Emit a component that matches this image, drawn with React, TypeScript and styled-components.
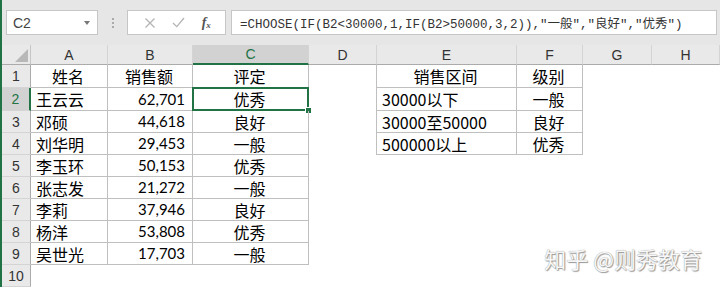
import React from "react";
import styled, { createGlobalStyle, css } from "styled-components";

const GREEN = "#217346";
const GRID = "#bfbfbf";

const columns = ["A", "B", "C", "D", "E", "F", "G", "H"];
const rowCount = 10;

type Align = "left" | "center" | "right";
type CellData = { text: string; align: Align; num?: boolean; border?: boolean; edge?: boolean };

const people = [
  ["王云云", "62,701", "优秀"],
  ["邓硕", "44,618", "良好"],
  ["刘华明", "29,453", "一般"],
  ["李玉环", "50,153", "优秀"],
  ["张志发", "21,272", "一般"],
  ["李莉", "37,946", "良好"],
  ["杨洋", "53,808", "优秀"],
  ["吴世光", "17,703", "一般"],
];

const ranges = [
  ["30000以下", "一般"],
  ["30000至50000", "良好"],
  ["500000以上", "优秀"],
];

const empty = (): CellData => ({ text: "", align: "left" });

const buildRow = (r: number): CellData[] => {
  const cells: CellData[] = columns.map(empty);
  if (r === 0) {
    cells[0] = { text: "姓名", align: "center", border: true };
    cells[1] = { text: "销售额", align: "center", border: true };
    cells[2] = { text: "评定", align: "center", border: true };
    cells[4] = { text: "销售区间", align: "center", border: true, edge: true };
    cells[5] = { text: "级别", align: "center", border: true };
  } else if (r <= 8) {
    const p = people[r - 1];
    cells[0] = { text: p[0], align: "left", border: true };
    cells[1] = { text: p[1], align: "right", num: true, border: true };
    cells[2] = { text: p[2], align: "center", border: true };
    if (r <= 3) {
      const g = ranges[r - 1];
      cells[4] = { text: g[0], align: "left", border: true, edge: true };
      cells[5] = { text: g[1], align: "center", border: true };
    }
  }
  return cells;
};

const App = () => {
  const rows = Array.from({ length: rowCount }, (_, r) => r);
  return (
    <>
      <GlobalStyle />
      <Page>
        <Toolbar>
          <NameBox>
            <span>C2</span>
            <Caret />
          </NameBox>
          <Grip>
            <i />
            <i />
            <i />
          </Grip>
          <FuncButtons>
            <svg width="12" height="12" viewBox="0 0 12 12">
              <path d="M1.5 1.5 L10.5 10.5 M10.5 1.5 L1.5 10.5" stroke="#b4b4b4" strokeWidth="1.3" fill="none" />
            </svg>
            <svg width="13" height="11" viewBox="0 0 13 11">
              <path d="M1 6 L4.8 9.6 L12 1" stroke="#b4b4b4" strokeWidth="1.3" fill="none" />
            </svg>
            <Fx>
              f<sub>x</sub>
            </Fx>
          </FuncButtons>
          <FormulaBox>
            =CHOOSE(IF(B2&lt;30000,1,IF(B2&gt;50000,3,2)),"一般","良好","优秀")
          </FormulaBox>
        </Toolbar>
        <Sheet>
          <Corner />
          {columns.map((c) => (
            <ColHead key={c} $active={c === "C"}>
              {c}
            </ColHead>
          ))}
          {rows.map((r) => (
            <React.Fragment key={r}>
              <RowHead $active={r === 1}>{r + 1}</RowHead>
              {buildRow(r).map((cell, c) => (
                <Cell key={c} $align={cell.align} $border={cell.border} $edge={cell.edge} $num={cell.num}>
                  {cell.text}
                  {r === 1 && c === 2 && (
                    <Selection>
                      <FillHandle />
                    </Selection>
                  )}
                </Cell>
              ))}
            </React.Fragment>
          ))}
        </Sheet>
        <Watermark>知乎 @则秀教育</Watermark>
      </Page>
    </>
  );
};
export default App;

const GlobalStyle = createGlobalStyle`
  html, body {
    margin: 0;
    padding: 0;
    background: #fff;
    font-family: "Noto Sans CJK SC", sans-serif;
  }
`;
const Page = styled.div`
  position: relative;
  width: 720px;
  box-sizing: border-box;
  border-left: 2px solid ${GREEN};
  background: #fff;
`;
const Toolbar = styled.div`
  display: flex;
  align-items: flex-start;
  height: 45px;
  padding-top: 10px;
  box-sizing: border-box;
  background: #e6e6e6;
`;
const Box = css`
  height: 25px;
  box-sizing: border-box;
  background: #fff;
  border: 1px solid #c6c6c6;
  display: flex;
  align-items: center;
`;
const NameBox = styled.div`
  ${Box};
  margin-left: 4px;
  width: 92px;
  justify-content: space-between;
  padding: 0 7px 0 6px;
  font-family: "Liberation Sans", sans-serif;
  font-size: 14px;
  color: #444;
`;
const Caret = styled.span`
  width: 0;
  height: 0;
  border-left: 3.5px solid transparent;
  border-right: 3.5px solid transparent;
  border-top: 4px solid #777;
`;
const Grip = styled.div`
  width: 29px;
  height: 25px;
  display: flex;
  flex-direction: column;
  align-items: center;
  justify-content: center;
  gap: 2px;
  i {
    width: 2px;
    height: 2px;
    background: #aaa;
  }
`;
const FuncButtons = styled.div`
  ${Box};
  width: 99px;
  justify-content: space-around;
  padding: 0 6px 0 8px;
`;
const Fx = styled.span`
  font-family: "Liberation Serif", serif;
  font-style: italic;
  font-weight: bold;
  font-size: 14px;
  color: #555;
  sub {
    font-size: 9px;
    vertical-align: -1px;
  }
`;
const FormulaBox = styled.div`
  ${Box};
  flex: 1;
  margin-left: 5px;
  margin-right: 3px;
  padding-left: 8px;
  font-family: "Liberation Mono", "Noto Sans CJK SC", monospace;
  font-size: 12.5px;
  color: #333;
  white-space: nowrap;
`;
const Sheet = styled.div`
  display: grid;
  grid-template-columns: 29px 77px 85px 116px 68px 140px 66px 69px 1fr;
  grid-template-rows: 20px 23px 23px repeat(8, 22px);
`;
const HeadBase = css<{ $active?: boolean }>`
  box-sizing: border-box;
  display: flex;
  align-items: center;
  justify-content: center;
  font-family: "Liberation Sans", sans-serif;
  font-size: 14px;
  line-height: 1;
  background: ${(p) => (p.$active ? "#d2d2d2" : "#e9e9e9")};
  color: ${(p) => (p.$active ? GREEN : "#333")};
`;
const Corner = styled.div`
  box-sizing: border-box;
  background: #e9e9e9;
  border-right: 1px solid #c6c6c6;
  border-bottom: 1px solid #ababab;
  position: relative;
  &::after {
    content: "";
    position: absolute;
    right: 2px;
    bottom: 2px;
    border-left: 13px solid transparent;
    border-bottom: 13px solid #b8b8b8;
  }
`;
const ColHead = styled.div<{ $active?: boolean }>`
  ${HeadBase};
  border-right: 1px solid #d4d4d4;
  border-bottom: ${(p) => (p.$active ? `2px solid ${GREEN}` : "1px solid #ababab")};
`;
const RowHead = styled.div<{ $active?: boolean }>`
  ${HeadBase};
  border-bottom: 1px solid #d4d4d4;
  border-right: ${(p) => (p.$active ? `2px solid ${GREEN}` : "1px solid #ababab")};
`;
const Cell = styled.div<{ $align: Align; $border?: boolean; $edge?: boolean; $num?: boolean }>`
  position: relative;
  box-sizing: border-box;
  display: flex;
  align-items: center;
  justify-content: ${(p) => (p.$align === "left" ? "flex-start" : p.$align === "right" ? "flex-end" : "center")};
  padding: 0 7px 0 5px;
  font-family: ${(p) => (p.$num ? `Lato, "Noto Sans CJK SC", sans-serif` : `"Noto Sans CJK SC", sans-serif`)};
  font-size: ${(p) => (p.$num ? "15px" : "16px")};
  line-height: 1;
  color: #000;
  white-space: nowrap;
  border-right: 1px solid ${(p) => (p.$border ? GRID : "transparent")};
  border-bottom: 1px solid ${(p) => (p.$border ? GRID : "transparent")};
  ${(p) => p.$edge && `box-shadow: -1px 0 0 ${GRID};`}
`;
const Selection = styled.div`
  position: absolute;
  left: -1px;
  top: -1px;
  right: -1px;
  bottom: -1px;
  border: 2px solid ${GREEN};
`;
const FillHandle = styled.div`
  position: absolute;
  right: -5px;
  bottom: -5px;
  width: 5px;
  height: 5px;
  background: ${GREEN};
  border: 1px solid #fff;
`;
const Watermark = styled.div`
  position: absolute;
  right: 18px;
  top: 242px;
  font-family: "Noto Sans CJK SC", sans-serif;
  font-size: 22px;
  color: #f7f7f7;
  text-shadow: 0 0 1px #888, 1px 1px 1px #999;
  pointer-events: none;
`;
